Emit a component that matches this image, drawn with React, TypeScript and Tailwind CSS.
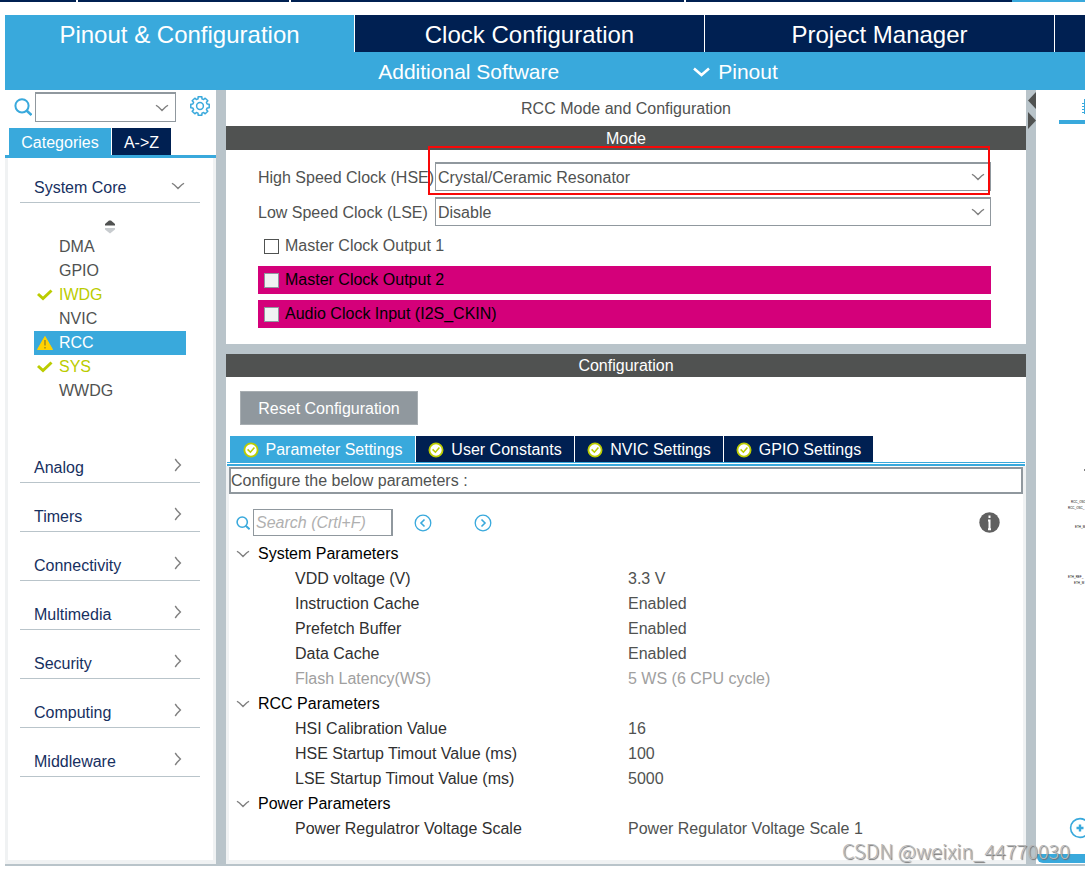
import React, { useState } from 'react';

const categories = ['Analog', 'Timers', 'Connectivity', 'Multimedia', 'Security', 'Computing', 'Middleware'];

type Peripheral = { name: string; status?: 'ok' | 'warning' };

const systemCore: Peripheral[] = [
  { name: 'DMA' },
  { name: 'GPIO' },
  { name: 'IWDG', status: 'ok' },
  { name: 'NVIC' },
  { name: 'RCC', status: 'warning' },
  { name: 'SYS', status: 'ok' },
  { name: 'WWDG' },
];

const configTabs = [
  { name: 'Parameter Settings', width: 'w-[185px]' },
  { name: 'User Constants', width: 'w-[158px]' },
  { name: 'NVIC Settings', width: 'w-[148px]' },
  { name: 'GPIO Settings', width: 'w-[149px]' },
];

const parameterGroups = [
  {
    title: 'System Parameters',
    rows: [
      { name: 'VDD voltage (V)', value: '3.3 V' },
      { name: 'Instruction Cache', value: 'Enabled' },
      { name: 'Prefetch Buffer', value: 'Enabled' },
      { name: 'Data Cache', value: 'Enabled' },
      { name: 'Flash Latency(WS)', value: '5 WS (6 CPU cycle)', disabled: true },
    ],
  },
  {
    title: 'RCC Parameters',
    rows: [
      { name: 'HSI Calibration Value', value: '16' },
      { name: 'HSE Startup Timout Value (ms)', value: '100' },
      { name: 'LSE Startup Timout Value (ms)', value: '5000' },
    ],
  },
  {
    title: 'Power Parameters',
    rows: [{ name: 'Power Regulatror Voltage Scale', value: 'Power Regulator Voltage Scale 1' }],
  },
];

// Outline of a cog with 8 teeth, centred in a 20x20 box
const gearPoints = Array.from({ length: 8 }, (_, i) => {
  const base = (i * Math.PI) / 4;
  return [
    [-0.27, 7.4],
    [-0.2, 9.4],
    [0.2, 9.4],
    [0.27, 7.4],
  ]
    .map(([a, r]) => `${(10 + r * Math.sin(base + a)).toFixed(2)},${(10 - r * Math.cos(base + a)).toFixed(2)}`)
    .join(' ');
}).join(' ');

function Chevron({ className = '' }: { className?: string }) {
  return (
    <svg className={className} width="14" height="8" viewBox="0 0 14 8" fill="none" stroke="#808080" strokeWidth="1.4">
      <path d="M1 1.2 L3.5 3 L7 6.4 L10.5 3 L13 1.2" />
    </svg>
  );
}

function SearchIcon({ size }: { size: number }) {
  return (
    <svg width={size} height={size} viewBox="0 0 18 18" fill="none" stroke="#39a9dc" strokeWidth="2" className="shrink-0">
      <circle cx="8" cy="7.8" r="6.6" />
      <path d="M12.5 12.5 L17.5 17" strokeWidth="2.6" />
    </svg>
  );
}

function GearIcon() {
  return (
    <svg width="20" height="20" viewBox="0 0 20 20" fill="none" stroke="#39a9dc" strokeWidth="1.5" strokeLinejoin="round">
      <polygon points={gearPoints} />
      <circle cx="10" cy="10" r="3.4" />
    </svg>
  );
}

function StatusIcon({ status }: { status?: Peripheral['status'] }) {
  if (status === 'ok') {
    return (
      <svg width="16" height="12" viewBox="0 0 16 12" fill="none" stroke="#bbcc00" strokeWidth="3">
        <path d="M1 5 L6 9.5 L14.5 1.5" />
      </svg>
    );
  }
  if (status === 'warning') {
    return (
      <svg width="16" height="14" viewBox="0 0 16 14">
        <path d="M8 0.5 L15.5 13.5 H0.5 Z" fill="#ffd200" stroke="#ffd200" strokeLinejoin="round" />
        <path d="M8 4 V9.5 M8 11 V12.5" stroke="#8a7a20" strokeWidth="1.2" />
      </svg>
    );
  }
  return null;
}

function TabCheck() {
  return (
    <svg width="16" height="16" viewBox="0 0 16 16">
      <circle cx="8" cy="8" r="6.6" fill="#ffffff" stroke="#bbcc00" strokeWidth="1.8" />
      <path d="M4.6 7.4 L7.4 10.2 L11.4 5.6" fill="none" stroke="#bbcc00" strokeWidth="1.6" />
    </svg>
  );
}

function CircleArrow({ flip = false }: { flip?: boolean }) {
  return (
    <svg width="18" height="18" viewBox="0 0 18 18" fill="none" stroke="#39a9dc" strokeWidth="1.3">
      <circle cx="9" cy="9" r="7.8" />
      <path d={flip ? 'M7.5 5.5 L11 9 L7.5 12.5' : 'M10.5 5.5 L7 9 L10.5 12.5'} strokeWidth="1.6" />
    </svg>
  );
}

function ClockSelect({ id, label, options, highlighted = false }: { id: string; label: string; options: string[]; highlighted?: boolean }) {
  return (
    <div className="flex h-[29px] items-center">
      <label htmlFor={id} className="w-[177px] shrink-0 pt-[2px] whitespace-nowrap">
        {label}
      </label>
      <div className="relative h-full flex-1">
        <select id={id} className="h-full w-full appearance-none border border-t-2 border-[#90989e] bg-white pt-px pl-[2px] text-[#505251]">
          {options.map((option) => (
            <option key={option}>{option}</option>
          ))}
        </select>
        <Chevron className="pointer-events-none absolute top-[11px] right-[6px]" />
        {highlighted && <div className="pointer-events-none absolute -top-4 right-px -bottom-1 -left-[7px] border-2 border-[#f80808]" />}
      </div>
    </div>
  );
}

function Sidebar() {
  const [selected, setSelected] = useState('RCC');

  return (
    <aside className="flex flex-col">
      <div className="flex h-[38px] items-start pt-[2px] pl-[9px]">
        <div className="mr-[3px] mt-[6px]">
          <SearchIcon size={18} />
        </div>
        <div className="relative h-[30px] w-[141px]">
          <select aria-label="Search peripheral" className="h-full w-full appearance-none border border-t-2 border-[#90989e] bg-white" />
          <Chevron className="pointer-events-none absolute top-[12px] right-[7px]" />
        </div>
        <button aria-label="Settings" className="mt-[4px] ml-[14px]">
          <GearIcon />
        </button>
      </div>
      <div className="flex h-[27px] gap-px pl-[4px] text-white">
        <button className="w-[102px] bg-[#39a9dc] pt-[2px]">Categories</button>
        <button className="w-[59px] bg-[#002052] pt-[2px]">A-&gt;Z</button>
      </div>
      <div className="h-[3px] bg-[#39a9dc]" />
      <div className="flex-1 border-x-[3px] border-b-4 border-[#f0f2f3] pt-[9px] pr-[13px] pl-3">
        <button className="flex h-9 w-full items-end justify-between border-b border-[#b9c4ca] pr-[15px] pb-[4px] pl-[14px] text-[#17305f]">
          System Core
          <Chevron className="mb-[8px]" />
        </button>
        <div className="flex h-8 items-center justify-center pt-4">
          <svg width="10" height="14" viewBox="0 0 10 14">
            <path d="M4 0.5 H6 L10 4 V5.5 H0 V4 Z" fill="#505251" />
            <path d="M0 8 H10 V9.5 L5 13.5 L0 9.5 Z" fill="#c8cccf" />
          </svg>
        </div>
        <ul className="pr-[14px] pl-[14px]">
          {systemCore.map(({ name, status }) => (
            <li key={name}>
              <button
                onClick={() => setSelected(name)}
                className={`flex h-6 w-full items-center pl-[3px] ${
                  selected === name ? 'bg-[#39a9dc] text-white' : status === 'ok' ? 'text-[#bbcc00]' : 'text-[#505251]'
                }`}
              >
                <span className="w-[22px]">
                  <StatusIcon status={status} />
                </span>
                {name}
              </button>
            </li>
          ))}
        </ul>
        <div className="mt-[31px]">
          {categories.map((category) => (
            <button
              key={category}
              className="flex h-[49px] w-full items-end justify-between border-b border-[#b9c4ca] pr-[15px] pb-[4px] pl-[14px] text-[#17305f]"
            >
              {category}
              <Chevron className="mb-[9px] -rotate-90" />
            </button>
          ))}
        </div>
      </div>
    </aside>
  );
}

function ModePanel() {
  return (
    <section>
      <h2 className="flex h-9 items-center justify-center pt-[2px]">RCC Mode and Configuration</h2>
      <h3 className="flex h-6 items-center justify-center bg-[#505251] pt-[2px] text-white">Mode</h3>
      <div className="flex flex-col gap-[6px] pt-3 pr-[35px] pb-4 pl-8">
        <ClockSelect id="hse" label="High Speed Clock (HSE)" options={['Crystal/Ceramic Resonator', 'BYPASS Clock Source', 'Disable']} highlighted />
        <ClockSelect id="lse" label="Low Speed Clock (LSE)" options={['Disable', 'Crystal/Ceramic Resonator']} />
        <label className="flex h-7 items-center gap-[6px] pl-[6px]">
          <input type="checkbox" className="size-[15px] appearance-none border border-[#505251] bg-white" />
          Master Clock Output 1
        </label>
        {['Master Clock Output 2', 'Audio Clock Input (I2S_CKIN)'].map((text) => (
          <label key={text} className="flex h-7 items-center gap-[6px] bg-[#d4007a] pl-[6px] text-black">
            <input type="checkbox" disabled className="size-[15px] appearance-none border border-[#90989e] bg-[#f0f2f3]" />
            {text}
          </label>
        ))}
      </div>
    </section>
  );
}

function ParameterTable() {
  return (
    <table className="w-full table-fixed border-collapse text-left">
      <colgroup>
        <col className="w-[399px]" />
        <col />
      </colgroup>
      {parameterGroups.map((group) => (
        <tbody key={group.title}>
          <tr className="h-[25px]">
            <th colSpan={2} className="p-0 font-normal text-black">
              <button className="flex items-center gap-[8px] pl-[7px]">
                <Chevron />
                {group.title}
              </button>
            </th>
          </tr>
          {group.rows.map((row) => (
            <tr key={row.name} className={`h-[25px] ${'disabled' in row ? 'text-[#a0a0a0]' : 'text-[#505251]'}`}>
              <td className={`p-0 pl-[66px] ${'disabled' in row ? '' : 'text-[#303030]'}`}>{row.name}</td>
              <td className="p-0">{row.value}</td>
            </tr>
          ))}
        </tbody>
      ))}
    </table>
  );
}

function ConfigurationPanel() {
  const [activeTab, setActiveTab] = useState(configTabs[0].name);

  return (
    <section>
      <h3 className="flex h-[23px] items-center justify-center bg-[#505251] text-white">Configuration</h3>
      <button className="mt-[14px] ml-[14px] h-[34px] w-[178px] border border-[#a8aeb2] bg-[#90989e] pt-[2px] text-white">
        Reset Configuration
      </button>
      <div className="mt-[11px] flex h-[26px] gap-px pl-1">
        {configTabs.map(({ name, width }) => (
          <button
            key={name}
            onClick={() => setActiveTab(name)}
            className={`flex items-center justify-center gap-[7px] whitespace-nowrap pt-[2px] text-white ${width} ${
              activeTab === name ? 'bg-[#39a9dc]' : 'bg-[#002052]'
            }`}
          >
            <TabCheck />
            {name}
          </button>
        ))}
      </div>
      <div className="mx-px h-1 border-t border-b-2 border-[#39a9dc]" />
      <div className="border-x-[3px] border-b-4 border-[#f0f2f3] pt-px pb-[19px]">
        <div className="flex h-[27px] items-center border-2 border-[#90989e]">Configure the below parameters :</div>
        <div className="flex h-[42px] items-end pl-[7px]">
          <div className="mr-[3px] mb-[6px]">
            <SearchIcon size={14} />
          </div>
          <input
            aria-label="Search parameters"
            placeholder="Search (Crtl+F)"
            className="h-[27px] w-[140px] border border-r-2 border-[#90989e] pl-[2px] italic placeholder:text-[#b0b0b0]"
          />
          <button aria-label="Previous match" className="mb-[4px] ml-[21px]">
            <CircleArrow />
          </button>
          <button aria-label="Next match" className="mb-[4px] ml-[42px]">
            <CircleArrow flip />
          </button>
          <button aria-label="Information" className="mr-[23px] mb-[3px] ml-auto">
            <svg width="21" height="21" viewBox="0 0 21 21">
              <circle cx="10.5" cy="10.5" r="10.2" fill="#606060" />
              <path d="M10.5 3.6 V6 M9 8.4 H10.5 V17 M9 17.2 H12" stroke="#ffffff" strokeWidth="2" fill="none" />
            </svg>
          </button>
        </div>
        <div className="mt-[5px]">
          <ParameterTable />
        </div>
      </div>
    </section>
  );
}

// Left edge of the chip view: toolbar, pin labels and zoom control
function PinoutView() {
  return (
    <aside className="relative overflow-hidden whitespace-nowrap text-[3px] leading-[6px] text-black">
      <svg className="absolute top-[8px] left-[45px]" width="20" height="18" viewBox="0 0 20 18" fill="none" stroke="#39a9dc">
        <path d="M1 5.5 H4 M1 8.5 H4 M1 11.5 H4 M1 14.5 H4" />
        <rect x="3" y="1" width="14" height="15" fill="#39a9dc" stroke="none" />
      </svg>
      <div className="absolute top-[30px] right-0 left-[23px] h-1 bg-[#39a9dc]" />
      <div className="absolute top-[379px] right-0 h-[2px] w-px bg-[#808080]" />
      <span className="absolute top-[409px] left-[35px]">RCC_OSC</span>
      <span className="absolute top-[415px] left-[32px]">RCC_OSC_</span>
      <span className="absolute top-[434px] left-[39px]">ETH_M</span>
      <span className="absolute top-[484px] left-[32px]">ETH_REF_</span>
      <span className="absolute top-[490px] left-[38px]">ETH_M</span>
      <button aria-label="Zoom in" className="absolute top-[727px] left-[33px]">
        <svg width="22" height="22" viewBox="0 0 22 22" fill="none" stroke="#39a9dc" strokeWidth="1.6">
          <circle cx="11" cy="11" r="9.4" />
          <path d="M11 7.5 V14.5 M7.5 11 H14.5" strokeWidth="2.4" />
        </svg>
      </button>
      <div className="absolute right-0 bottom-px left-px h-[9px] rounded-bl-md bg-[#39a9dc]" />
    </aside>
  );
}

export default function App() {
  return (
    <div className="relative overflow-hidden bg-white pb-1 text-[16px] leading-5 text-[#505251] [font-family:'Liberation_Sans',Arial,sans-serif]">
      <div className="flex h-[2px] gap-[2px] bg-white">
        <div className="w-[76px] bg-[#002052]" />
        <div className="w-[211px] bg-[#002052]" />
        <div className="w-[393px] bg-[#002052]" />
        <div className="w-[326px] bg-[#002052]" />
        <div className="-ml-[2px] flex-1 bg-[#39a9dc]" />
      </div>

      <nav className="mt-[13px] ml-[5px] flex h-[37px] text-[24px] text-white">
        <button className="flex-1 border-r border-white bg-[#39a9dc] pt-[2px]">Pinout &amp; Configuration</button>
        <button className="flex-1 border-r border-white bg-[#002052] pt-[2px]">Clock Configuration</button>
        <button className="flex-1 border-r border-white bg-[#002052] pt-[2px]">Project Manager</button>
        <button aria-label="Tools" className="w-[30px] bg-[#002052]" />
      </nav>
      <div className="ml-[5px] flex h-[38px] items-center justify-center gap-[134px] bg-[#39a9dc] pt-[2px] pl-[66px] text-[21px] text-white">
        <button>Additional Software</button>
        <button className="flex items-center gap-[8px]">
          <svg width="17" height="11" viewBox="0 0 17 11" fill="none" stroke="#ffffff" strokeWidth="2.6">
            <path d="M1 1.5 L8.5 8 L16 1.5" />
          </svg>
          Pinout
        </button>
      </div>

      <div className="ml-[5px] grid grid-cols-[211px_10px_1fr_10px_49px] border-b-2 border-[#b9c4ca]">
        <Sidebar />
        <div className="bg-[#b9c4ca]" />
        <main>
          <ModePanel />
          <div className="h-[10px] bg-[#b9c4ca]" />
          <ConfigurationPanel />
        </main>
        <div className="bg-[#b9c4ca] pt-px">
          <svg width="10" height="40" viewBox="0 0 10 40" fill="#505251">
            <path d="M10 1 V18 L2 9.5 Z" />
            <path d="M2 21 V38 L10 29.5 Z" />
          </svg>
        </div>
        <PinoutView />
      </div>

      <span className="absolute right-[15px] bottom-[9px] text-[20px] font-light text-[#b8b8b8] [font-family:'Noto_Sans_CJK_SC',sans-serif] [text-shadow:1px_1px_1px_#707070]">
        CSDN @weixin_44770030
      </span>
    </div>
  );
}
